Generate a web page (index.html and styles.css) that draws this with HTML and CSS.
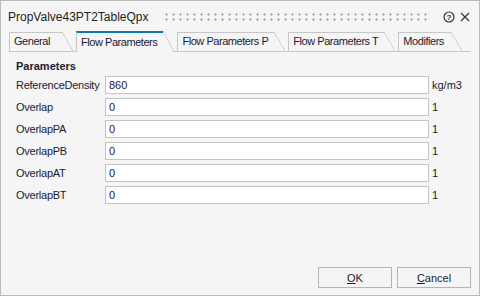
FILE: index.html
```html
<!DOCTYPE html>
<html lang="en">
<head>
  <meta charset="UTF-8" />
  <title>PropValve43PT2TableQpx</title>
  <link rel="stylesheet" href="styles.css">
</head>
<body>

  <div class="window">
    <div class="titlebar">
      <span class="title">PropValve43PT2TableQpx</span>
      <span class="grip"></span>
      <svg class="help" width="12" height="12" viewBox="0 0 12 12">
        <circle cx="6" cy="6" r="5" fill="none" stroke="#333" stroke-width="1.2"/>
        <text x="6" y="9" text-anchor="middle" font-size="8" font-family="Liberation Sans, sans-serif" font-weight="bold" fill="#333">?</text>
      </svg>
      <svg class="close" width="10" height="10" viewBox="0 0 10 10">
        <path d="M1 1 L9 9 M9 1 L1 9" stroke="#333" stroke-width="1.2"/>
      </svg>
    </div>

    <div class="tabs">
      <div class="tab">General</div>
      <div class="tab active">Flow Parameters</div>
      <div class="tab">Flow Parameters P</div>
      <div class="tab">Flow Parameters T</div>
      <div class="tab">Modifiers</div>
    </div>

    <div class="page">
      <div class="group-title">Parameters</div>
      <div class="rows">
        <div class="row">
          <label>ReferenceDensity</label>
          <input type="text" value="860" />
          <span class="unit">kg/m3</span>
        </div>
        <div class="row">
          <label>Overlap</label>
          <input type="text" value="0" />
          <span class="unit">1</span>
        </div>
        <div class="row">
          <label>OverlapPA</label>
          <input type="text" value="0" />
          <span class="unit">1</span>
        </div>
        <div class="row">
          <label>OverlapPB</label>
          <input type="text" value="0" />
          <span class="unit">1</span>
        </div>
        <div class="row">
          <label>OverlapAT</label>
          <input type="text" value="0" />
          <span class="unit">1</span>
        </div>
        <div class="row">
          <label>OverlapBT</label>
          <input type="text" value="0" />
          <span class="unit">1</span>
        </div>
      </div>
    </div>

    <div class="buttons">
      <button><u>O</u>K</button>
      <button><u>C</u>ancel</button>
    </div>
  </div>

</body>
</html>
```

FILE: styles.css
```css
* { box-sizing: border-box; }
body {
  margin: 0;
  font-family: 'Liberation Sans', Arial, sans-serif;
  font-size: 11px;
  color: #1a1a33;
}
.window {
  width: 480px;
  height: 296px;
  background: #f5f5f5;
  border: 1px solid #b9b9b9;
  display: flex;
  flex-direction: column;
}
.titlebar {
  height: 30px;
  display: flex;
  align-items: center;
  padding: 2px 9px 0 7px;
}
.title {
  font-size: 12px;
  color: #222;
}
.grip {
  flex: 1;
  height: 10px;
  margin: 0 12px 0 14px;
  background-image: radial-gradient(circle, #a6a6a6 0.9px, transparent 1.3px);
  background-size: 7px 5px;
}
.help { margin-right: 5px; }

.tabs {
  display: flex;
  align-items: flex-end;
  height: 21px;
  margin: 0 9px 0 8px;
  border-bottom: 1px solid #c6c6c6;
}
.tab {
  position: relative;
  min-width: 53px;
  height: 19px;
  line-height: 17px;
  padding: 0 6px 0 4px;
  margin-right: 14px;
  border-left: 1px solid #c6c6c6;
  border-top: 1px solid #c6c6c6;
  letter-spacing: -0.45px;
  white-space: nowrap;
}
.tab::after {
  content: '';
  position: absolute;
  left: 100%;
  top: -1px;
  bottom: 0;
  width: 11px;
  background: linear-gradient(to top right, transparent calc(50% - 0.7px), #c6c6c6, transparent calc(50% + 0.7px));
}
.tab.active {
  height: 21px;
  margin-bottom: -1px;
  line-height: 19px;
  border-top: 2px solid #0a78aa;
  background: #f5f5f5;
  z-index: 1;
}
.tab.active::after {
  top: -2px;
  background: linear-gradient(to top right, #f5f5f5 calc(50% - 0.7px), #c6c6c6, transparent calc(50% + 0.7px));
}

.page {
  padding: 7px 0 0 15px;
}
.group-title {
  font-weight: bold;
  line-height: 14px;
  margin-bottom: 3px;
}
.rows {
  display: flex;
  flex-direction: column;
  gap: 4px;
}
.row {
  display: flex;
  align-items: center;
  height: 18px;
}
.row label {
  width: 89px;
  letter-spacing: -0.25px;
}
.row input {
  width: 324px;
  height: 18px;
  padding: 0 3px;
  border: 1px solid #c4c4c4;
  background: #fff;
  font-family: inherit;
  font-size: 11px;
  color: #1a1a33;
  outline: none;
}
.unit {
  margin-left: 3px;
}

.buttons {
  margin-top: auto;
  display: flex;
  justify-content: flex-end;
  gap: 5px;
  padding: 0 8px 7px 0;
}
.buttons button {
  width: 74px;
  height: 21px;
  border: 1px solid #b4b4b4;
  background: #f5f5f5;
  font-family: inherit;
  font-size: 11px;
  color: #1a1a33;
}
```
